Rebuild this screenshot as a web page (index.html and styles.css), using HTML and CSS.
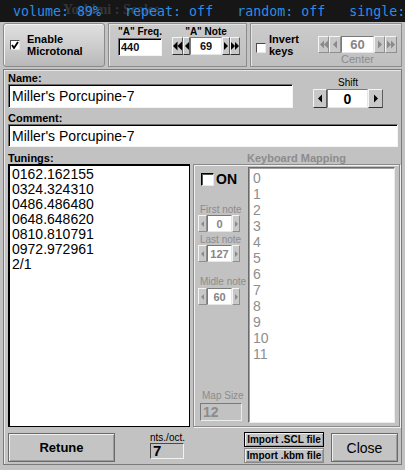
FILE: index.html
```html
<!DOCTYPE html>
<html>
<head>
<meta charset="utf-8">
<link rel="stylesheet" href="styles.css">
</head>
<body>
<svg class="sprite" aria-hidden="true">
  <symbol id="l1" viewBox="0 0 5 10"><polygon points="5,0 0,5 5,10"/></symbol>
  <symbol id="r1" viewBox="0 0 5 10"><polygon points="0,0 5,5 0,10"/></symbol>
  <symbol id="l2" viewBox="0 0 10 10"><polygon points="5,0 0,5 5,10"/><polygon points="10,0 5,5 10,10"/></symbol>
  <symbol id="r2" viewBox="0 0 10 10"><polygon points="0,0 5,5 0,10"/><polygon points="5,0 10,5 5,10"/></symbol>
</svg>
<div class="win">
  <div class="statusbar">
    <span class="wintitle">Yoshimi : Scales</span>
    <span class="status">volume: 89%   repeat: off   random: off   single:</span>
  </div>

  <div class="toprow">
    <div class="enable">
      <span class="chk"><svg width="8" height="8" viewBox="0 0 8 8"><path d="M1 4 L3 7 L7 1" fill="none" stroke="#000" stroke-width="1.8"/></svg></span>
      <span class="blabel">Enable<br>Microtonal</span>
    </div>
    <div class="tbox freqbox">
      <div class="fcol">
        <span class="slbl">"A" Freq.</span>
        <div class="field freq">440</div>
      </div>
      <div class="fcol notecol">
        <span class="slbl">"A" Note</span>
        <div class="counter note">
          <span class="cbtn b11"><svg width="10" height="10"><use href="#l2"/></svg></span>
          <span class="cbtn b7"><svg width="4" height="10"><use href="#l1"/></svg></span>
          <span class="cval v32">69</span>
          <span class="cbtn b8"><svg width="4" height="10"><use href="#r1"/></svg></span>
          <span class="cbtn b10"><svg width="9" height="10"><use href="#r2"/></svg></span>
        </div>
      </div>
    </div>
    <div class="tbox invbox">
      <span class="chk inv"></span>
      <span class="blabel">Invert<br>keys</span>
      <div class="centercol">
        <div class="counter center off">
          <span class="cbtn c11"><svg width="8" height="9"><use href="#l2"/></svg></span>
          <span class="cbtn c12"><svg width="4" height="9"><use href="#l1"/></svg></span>
          <span class="cval c33">60</span>
          <span class="cbtn c11"><svg width="4" height="9"><use href="#r1"/></svg></span>
          <span class="cbtn c12"><svg width="8" height="9"><use href="#r2"/></svg></span>
        </div>
        <span class="centerlbl">Center</span>
      </div>
    </div>
  </div>

  <div class="main">
    <div class="namerow">
      <div class="namecol">
        <span class="lbl">Name:</span>
        <div class="input name">Miller's Porcupine-7</div>
      </div>
      <div class="shiftcol">
        <span class="shiftlbl">Shift</span>
        <div class="counter shift">
          <span class="cbtn s14"><svg width="4" height="9"><use href="#l1"/></svg></span>
          <span class="cval s41">0</span>
          <span class="cbtn s15"><svg width="4" height="9"><use href="#r1"/></svg></span>
        </div>
      </div>
    </div>

    <span class="lbl comlbl">Comment:</span>
    <div class="input comment">Miller's Porcupine-7</div>

    <div class="lblrow">
      <span class="lbl tunlbl">Tunings:</span>
      <span class="lbl kblbl">Keyboard Mapping</span>
    </div>

    <div class="tunrow">
      <div class="tunings">
        <div>0162.162155</div>
        <div>0324.324310</div>
        <div>0486.486480</div>
        <div>0648.648620</div>
        <div>0810.810791</div>
        <div>0972.972961</div>
        <div>2/1</div>
      </div>
      <div class="kbgroup">
        <div class="kbleft">
          <div class="onrow"><span class="chk on"></span><span class="ontxt">ON</span></div>
          <span class="glbl first">First note</span>
          <div class="counter small off">
            <span class="cbtn k9"><svg width="3" height="8"><use href="#l1"/></svg></span>
            <span class="cval k25">0</span>
            <span class="cbtn k8"><svg width="3" height="8"><use href="#r1"/></svg></span>
          </div>
          <span class="glbl last">Last note</span>
          <div class="counter small off">
            <span class="cbtn k9"><svg width="3" height="8"><use href="#l1"/></svg></span>
            <span class="cval k25">127</span>
            <span class="cbtn k8"><svg width="3" height="8"><use href="#r1"/></svg></span>
          </div>
          <span class="glbl mid">Midle note</span>
          <div class="counter small off">
            <span class="cbtn k9"><svg width="3" height="8"><use href="#l1"/></svg></span>
            <span class="cval k25">60</span>
            <span class="cbtn k8"><svg width="3" height="8"><use href="#r1"/></svg></span>
          </div>
          <div class="mapsize">
            <span class="glbl">Map Size</span>
            <div class="mapbox">12</div>
          </div>
        </div>
        <div class="kblist">
          <div>0</div><div>1</div><div>2</div><div>3</div><div>4</div><div>5</div>
          <div>6</div><div>7</div><div>8</div><div>9</div><div>10</div><div>11</div>
        </div>
      </div>
    </div>

    <div class="bottom">
      <div class="btn retune">Retune</div>
      <div class="ntscol">
        <span class="ntslbl">nts./oct.</span>
        <div class="ntsbox">7</div>
      </div>
      <div class="importcol">
        <div class="btn imp focus">Import .SCL file</div>
        <div class="btn imp imp2">Import .kbm file</div>
      </div>
      <div class="btn close">Close</div>
    </div>
  </div>
</div>
</body>
</html>
```

FILE: styles.css
```css
* { box-sizing: border-box; }
html, body { margin: 0; padding: 0; }
body {
  width: 405px; height: 470px; overflow: hidden;
  background: #c2c2c2;
  font-family: "Liberation Sans", Arial, sans-serif;
  color: #000;
}
.sprite { position: absolute; width: 0; height: 0; overflow: hidden; }
.win { width: 405px; height: 470px; background: #c2c2c2; display: flex; flex-direction: column; }

/* status bar */
.statusbar { height: 22px; flex: none; background: #161616; display: grid; overflow: hidden; }
.statusbar > * { grid-area: 1 / 1; }
.wintitle {
  font: bold 14px "Liberation Serif", serif; color: #353535;
  line-height: 20px; padding-left: 63px;
}
.status {
  font-family: "DejaVu Sans Mono", monospace; font-size: 13.3px;
  color: #2b8de8; white-space: pre; line-height: 18px; padding: 3px 0 0 13px;
}

/* top row */
.toprow { display: flex; gap: 3px; margin: 1px 3px 0; height: 44px; flex: none; }
.enable {
  width: 102px; flex: none;
  border: 1px solid #8a8a8a; border-radius: 3px;
  background: linear-gradient(#e0e0e0, #cecece 50%, #b8b8b8);
  box-shadow: inset 1px 1px 0 #f4f4f4;
  display: flex; align-items: center; padding-left: 6px; gap: 7px;
}
.chk {
  width: 10px; height: 10px; flex: none; background: #fff;
  border: 1px solid; border-color: #4a4a4a #e8e8e8 #e8e8e8 #4a4a4a;
  display: flex; align-items: center; justify-content: center;
}
.blabel { font-weight: bold; font-size: 11px; line-height: 12px; }
.tbox {
  border: 1px solid #8c8c8c; box-shadow: inset 1px 1px 0 #e4e4e4;
  background: linear-gradient(#cbcbcb, #bfbfbf);
  display: flex;
}
.freqbox { width: 139px; flex: none; padding: 3px 0 0 9px; gap: 10px; }
.fcol { display: flex; flex-direction: column; align-items: center; }
.slbl { font-weight: bold; font-size: 10px; line-height: 10px; height: 10px; }
.field {
  background: #fff; border: 1px solid; border-color: #6e6e6e #f4f4f4 #f4f4f4 #6e6e6e;
  box-shadow: inset 1px 1px 0 #000;
}
.freq {
  width: 44px; height: 18px; margin-top: 1px;
  font-weight: bold; font-size: 11px; line-height: 16px; padding-left: 2px; color: #101018;
}
.invbox { flex: 1; padding: 0 4px 0 5px; align-items: center; }
.chk.inv { margin-top: 5px; margin-right: 3px; }
.centercol { margin-left: auto; align-self: flex-start; margin-top: 12px; display: flex; flex-direction: column; align-items: center; }
.centerlbl { font-size: 11px; line-height: 11px; color: #8c8c8c; margin-top: 1px; }

/* counters */
.counter { display: flex; flex: none; }
.cbtn {
  background: #c8c8c8; border: 1px solid; border-color: #f4f4f4 #5e5e5e #2e2e2e #f4f4f4;
  display: flex; align-items: center; justify-content: center; color: #000;
}
.cbtn svg { fill: currentColor; display: block; }
.cval {
  background: #fff; border: 1px solid; border-color: #7a7a7a #e6e6e6 #e6e6e6 #7a7a7a;
  display: flex; align-items: center; justify-content: center; font-weight: bold;
}
.note { height: 18px; }
.note .cval { font-size: 11px; color: #101018; }
.b11 { width: 11px; } .b7 { width: 7px; } .b8 { width: 8px; } .b10 { width: 10px; }
.v32 { width: 32px; }
.center { height: 17px; }
.c11 { width: 11px; } .c12 { width: 12px; } .c33 { width: 33px; font-size: 13px; }
.off .cbtn { color: #8a8a8a; border-color: #f4f4f4 #8e8e8e #8e8e8e #f4f4f4; }
.off .cval { color: #858585; }
.shift { height: 19px; }
.s14 { width: 14px; } .s15 { width: 15px; } .s41 { width: 41px; font-size: 14px; }
.small { height: 17px; width: 42px; }
.k9 { width: 9px; } .k8 { width: 8px; } .k25 { width: 25px; font-size: 11px; }

/* main panel */
.main {
  flex: none; margin: 2px 3px 0;
  border: 1px solid #7a7a7a; box-shadow: inset 1px 1px 0 #e8e8e8;
  padding: 3px 3px 1px 4px;
  display: flex; flex-direction: column;
}
.lbl { font-weight: bold; font-size: 11px; line-height: 11px; height: 11px; white-space: nowrap; }
.namerow { display: flex; align-items: flex-end; }
.namecol { width: 285px; flex: none; display: flex; flex-direction: column; }
.input {
  background: #fff; border: 1px solid; border-color: #6e6e6e #f4f4f4 #f4f4f4 #6e6e6e;
  box-shadow: inset 1px 1px 0 #000;
  font-size: 14px; padding-left: 3px; display: flex; align-items: center;
}
.name { height: 24px; }
.shiftcol { margin-left: 20px; width: 70px; display: flex; flex-direction: column; align-items: center; }
.shiftlbl { font-size: 10px; line-height: 10px; margin-bottom: 1px; }
.comlbl { margin-top: 5px; }
.comment { height: 23px; }
.lblrow { display: flex; margin-top: 6px; }
.tunlbl { width: 185px; flex: none; }
.kblbl { width: 207px; flex: none; text-align: center; color: #8c8c8c; }

.tunrow { display: flex; height: 263px; flex: none; }
.tunings {
  width: 182px; flex: none; background: #fff;
  border: 1px solid #000; box-shadow: inset 1px 1px 0 #000;
  padding: 2px 0 0 3px; font-size: 14px; line-height: 15px;
}
.kbgroup {
  width: 207px; flex: none; margin-left: 3px;
  border: 1px solid #8a8a8a; box-shadow: inset 1px 1px 0 #f0f0f0, 1px 1px 0 #f0f0f0;
  padding: 2px 4px 3px 1px; display: flex;
}
.kbleft { width: 53px; flex: none; display: flex; flex-direction: column; padding-left: 3px; }
.onrow { display: flex; align-items: center; gap: 2px; margin: 6px 0 0 3px; height: 13px; }
.chk.on { width: 13px; height: 13px; border-color: #000 #e8e8e8 #e8e8e8 #000; box-shadow: inset 1px 1px 0 #555; }
.ontxt { font-weight: bold; font-size: 14px; line-height: 13px; }
.glbl { font-size: 10px; line-height: 10px; height: 10px; color: #8c8c8c; padding-left: 2px; white-space: nowrap; }
.first { margin-top: 19px; }
.last { margin-top: 3px; }
.mid { margin-top: 15px; margin-bottom: 1px; }
.mapsize { margin-top: auto; margin-bottom: 2px; display: flex; flex-direction: column; padding-left: 2px; }
.mapbox {
  width: 42px; height: 18px; margin-top: 2px;
  border: 1px solid; border-color: #7a7a7a #ececec #ececec #7a7a7a;
  font-weight: bold; font-size: 14px; line-height: 16px; color: #8c8c8c; padding-left: 2px;
}
.kblist {
  flex: 1; background: #fff;
  border: 1px solid; border-color: #6a6a6a #ececec #ececec #6a6a6a;
  box-shadow: inset 1px 1px 0 #a0a0a0;
  padding: 2px 0 0 4px; font-size: 14px; line-height: 16px; color: #8e8e8e;
}

/* bottom row */
.bottom { display: flex; align-items: center; height: 31px; margin-top: 5px; flex: none; }
.btn {
  background: #c4c4c4; border: 1px solid #6a6a6a;
  box-shadow: inset 1px 1px 0 #f0f0f0, inset -1px -1px 0 #9c9c9c;
  display: flex; align-items: center; justify-content: center; flex: none;
}
.retune { width: 107px; height: 29px; font-weight: bold; font-size: 13px; }
.ntscol { margin-left: 35px; align-self: stretch; display: flex; flex-direction: column; padding-top: 1px; }
.ntslbl { font-size: 10px; line-height: 10px; height: 10px; }
.ntsbox {
  width: 34px; height: 16px;
  border: 1px solid; border-color: #4a4a4a #f2f2f2 #f2f2f2 #4a4a4a;
  font-weight: bold; font-size: 15px; line-height: 14px; padding-left: 2px;
}
.importcol { margin-left: 59px; width: 82px; align-self: stretch; display: flex; flex-direction: column; gap: 1px; }
.imp { height: 15px; font-weight: bold; font-size: 10px; }
.imp2 { height: 15px; border-color: #8a8a8a; }
.focus { border-color: #000; }
.close { width: 67px; height: 29px; margin-left: 7px; font-size: 14px; }
```
